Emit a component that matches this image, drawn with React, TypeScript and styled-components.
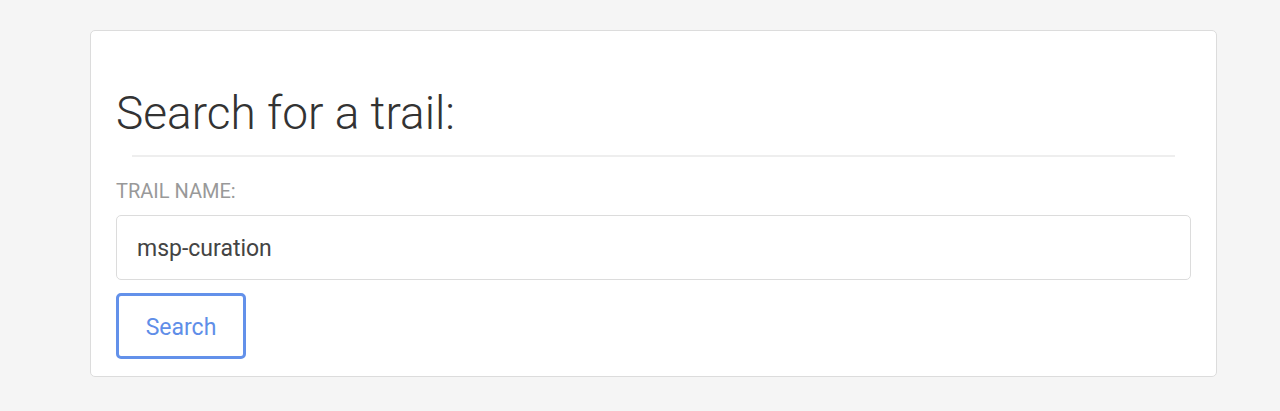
import React from "react";
import styled, { createGlobalStyle } from "styled-components";

const Global = createGlobalStyle`
  html, body { margin: 0; padding: 0; background: #f5f5f5; }
  body { font-family: Roboto, "Noto Sans", sans-serif; }
  * { box-sizing: border-box; }
`;

const Page = styled.div`
  padding: 30px 63px 0 90px;
`;

const Card = styled.section`
  background: #fff;
  border: 1px solid #dcdcdc;
  border-radius: 5px;
  padding: 55px 25px 17px 25px;
  display: flex;
  flex-direction: column;
`;

const Title = styled.h2`
  margin: 0;
  font-weight: 300;
  font-size: 46px;
  line-height: 54px;
  color: #333;
`;

const Divider = styled.hr`
  margin: 15px 16px 0 16px;
  border: 0;
  border-top: 2px solid #eee;
`;

const Label = styled.label`
  margin-top: 24px;
  font-size: 20px;
  line-height: 20px;
  color: #999;
  text-transform: uppercase;
`;

const Input = styled.input`
  margin-top: 14px;
  height: 65px;
  border: 1px solid #dcdcdc;
  border-radius: 5px;
  padding: 1px 20px 0;
  font-family: Roboto, sans-serif;
  font-size: 23px;
  color: #444;
  outline: none;
  background: #fff;
`;

const Button = styled.button`
  margin-top: 13px;
  align-self: flex-start;
  width: 130px;
  height: 66px;
  padding: 3px 0 0;
  border: 3px solid #6391ea;
  border-radius: 5px;
  background: #fff;
  color: #5f8ee8;
  font-family: Roboto, sans-serif;
  font-size: 23px;
  cursor: pointer;
`;

export default function App() {
  return (
    <>
      <Global />
      <Page>
        <Card>
          <Title>Search for a trail:</Title>
          <Divider />
          <Label htmlFor="trail">Trail name:</Label>
          <Input id="trail" defaultValue="msp-curation" />
          <Button>Search</Button>
        </Card>
      </Page>
    </>
  );
}
